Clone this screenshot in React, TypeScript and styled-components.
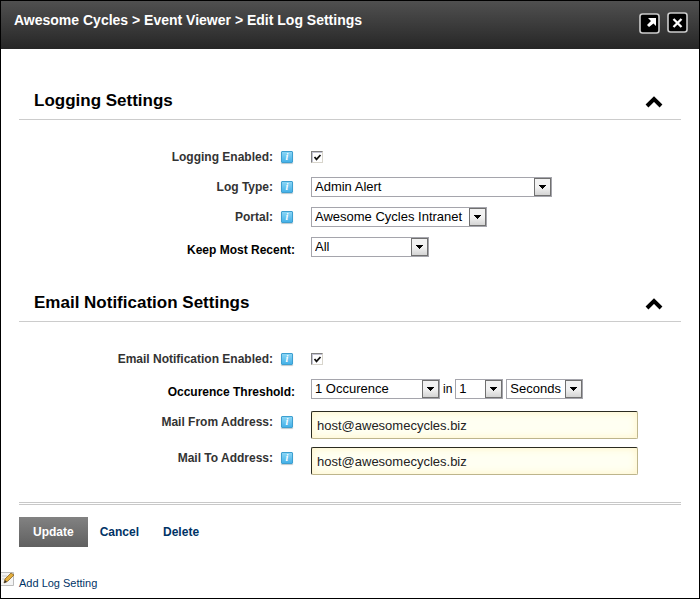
import React, { useState } from "react";
import styled, { createGlobalStyle } from "styled-components";

const GlobalStyle = createGlobalStyle`
  * { box-sizing: border-box; }
  body {
    margin: 0;
    background: #fff;
    color: #000;
    font-family: "Liberation Sans", Arial, sans-serif;
    font-size: 12px;
  }
`;

const Dialog = styled.div`
  min-height: 100vh;
  border: 1px solid #000;
  background: #fff;
`;

const TitleBar = styled.header`
  display: flex;
  justify-content: space-between;
  align-items: flex-start;
  height: 48px;
  padding: 11px 10px 0 13px;
  background: linear-gradient(#505050, #262626);
`;

const Title = styled.h1`
  margin: 0;
  color: #fff;
  font-size: 14px;
  line-height: 16px;
`;

const WindowButtons = styled.div`
  display: flex;
  gap: 6px;
`;

const WindowButton = styled.button`
  display: flex;
  width: 22px;
  height: 22px;
  padding: 0;
  border: 0;
  background: none;
`;

const Content = styled.main`
  padding: 36px 18px 0;
`;

const SectionHead = styled.div`
  display: flex;
  justify-content: space-between;
  align-items: center;
  height: 35px;
  padding: 0 18px 2px 15px;
  border-bottom: 1px solid #ccc;
`;

const SectionTitle = styled.h2`
  margin: 0;
  font-size: 17px;
  line-height: 20px;
`;

const CollapseButton = styled.button`
  display: flex;
  padding: 0;
  border: 0;
  background: none;
`;

const Rows = styled.div`
  padding: 22px 0 25px;
`;

const Row = styled.div<{ $tall?: boolean }>`
  display: grid;
  grid-template-columns: 276px minmax(0, 1fr);
  column-gap: 16px;
  height: ${(p) => (p.$tall ? 36 : 30)}px;
`;

const LabelCell = styled.div<{ $plain?: boolean; $tall?: boolean }>`
  display: flex;
  justify-content: flex-end;
  align-items: center;
  gap: 8px;
  height: ${(p) => (p.$tall ? 36 : 30)}px;
  padding: ${(p) => (p.$plain ? "6px 0 0" : "0 2px 0 0")};
`;

const Label = styled.label<{ $plain?: boolean }>`
  color: ${(p) => (p.$plain ? "#000" : "#333")};
  font-weight: bold;
  line-height: 16px;
`;

const HelpButton = styled.button`
  width: 12px;
  height: 12px;
  padding: 0;
  border: 1px solid #3d9fd0;
  border-radius: 1px;
  background: linear-gradient(#8ad5f5, #45b1e8);
  box-shadow: 0 1px 1px #bcc8ce;
  color: #fff;
  font: italic bold 10px/10px "Liberation Serif", serif;
`;

const Field = styled.div<{ $tall?: boolean }>`
  display: flex;
  align-items: flex-start;
  gap: 3px;
  padding-top: ${(p) => (p.$tall ? 7 : 5)}px;
  line-height: 20px;
`;

const CheckFrame = styled.span`
  display: grid;
  margin-top: 4px;
  width: 13px;
  height: 13px;

  > * { grid-area: 1 / 1; }
  > svg { pointer-events: none; }
  input:not(:checked) + svg { visibility: hidden; }
`;

const CheckInput = styled.input`
  appearance: none;
  width: 12px;
  height: 12px;
  margin: 0;
  border: 1px solid #d8d5cc;
  border-top-color: #808080;
  border-left-color: #808080;
  background: #fff;
  box-shadow: inset 1px 1px #c4c4d4;
`;

const SelectFrame = styled.span<{ $width: number }>`
  display: grid;
  grid-template-columns: minmax(0, 1fr) 18px;
  align-items: center;
  width: ${(p) => p.$width}px;
  height: 20px;
`;

const NativeSelect = styled.select`
  grid-area: 1 / 1 / 2 / 3;
  appearance: none;
  width: 100%;
  height: 20px;
  padding: 0 18px 0 3px;
  border: 1px solid #a5a5ac;
  border-radius: 0;
  background: #fff;
  color: #000;
  font: 13px/18px "Liberation Sans", Arial, sans-serif;
`;

const Arrow = styled.span`
  grid-area: 1 / 2;
  z-index: 1;
  display: flex;
  align-items: center;
  justify-content: center;
  width: 17px;
  height: 18px;
  border: 1px solid #707070;
  background: linear-gradient(#f2f2f2 50%, #d4d4d4);
  pointer-events: none;
`;

const MailInput = styled.input`
  width: 100%;
  max-width: 327px;
  height: 28px;
  padding: 0 5px;
  border: 1px solid #bdb58c;
  border-top-color: #2b2b20;
  border-left-color: #2b2b20;
  border-radius: 2px;
  background: #fffff2;
  box-shadow: inset 0 0 8px #fff3c4;
  color: #222;
  font: 13px "Liberation Sans", Arial, sans-serif;
`;

const Actions = styled.div`
  display: flex;
  align-items: center;
  margin-top: 1px;
  padding-top: 12px;
  border-top: 3px double #c8c8c8;
`;

const UpdateButton = styled.button`
  height: 30px;
  padding: 0 14px;
  border: 0;
  background: linear-gradient(#828282, #606060);
  color: #fff;
  font: bold 12px "Liberation Sans", Arial, sans-serif;
`;

const ActionLink = styled.a`
  padding: 0 12px;
  color: #036;
  font-weight: bold;
  text-decoration: none;
`;

const AddLink = styled.a`
  display: inline-flex;
  align-items: flex-start;
  gap: 4px;
  margin-top: 24px;
  color: #036;
  font-size: 11px;
  line-height: 24px;
  text-decoration: none;
`;

function Chevron() {
  return (
    <svg width="18" height="14" viewBox="0 0 18 14">
      <path d="M2 12 9 5 16 12" fill="none" stroke="#000" strokeWidth="4" />
    </svg>
  );
}

function Section({ title, children }: { title: string; children: React.ReactNode }) {
  const [open, setOpen] = useState(true);
  return (
    <section>
      <SectionHead>
        <SectionTitle>{title}</SectionTitle>
        <CollapseButton type="button" aria-label={title} aria-expanded={open} onClick={() => setOpen(!open)}>
          <Chevron />
        </CollapseButton>
      </SectionHead>
      {open && <Rows>{children}</Rows>}
    </section>
  );
}

type SettingProps = { id: string; label: string; plain?: boolean; tall?: boolean; children: React.ReactNode };

function Setting({ id, label, plain, tall, children }: SettingProps) {
  return (
    <Row $tall={tall}>
      <LabelCell $plain={plain} $tall={tall}>
        <Label htmlFor={id} $plain={plain}>{label}</Label>
        {!plain && <HelpButton type="button">i</HelpButton>}
      </LabelCell>
      <Field $tall={tall}>{children}</Field>
    </Row>
  );
}

function Checkbox({ id }: { id: string }) {
  return (
    <CheckFrame>
      <CheckInput id={id} type="checkbox" defaultChecked />
      <svg width="13" height="13" viewBox="0 0 13 13">
        <path d="m3.5 6 2 2.3 4-4.3" fill="none" stroke="#111" strokeWidth="1.8" />
      </svg>
    </CheckFrame>
  );
}

function Select({ id, label, value, width }: { id: string; label?: string; value: string; width: number }) {
  return (
    <SelectFrame $width={width}>
      <NativeSelect id={id} aria-label={label}>
        <option>{value}</option>
      </NativeSelect>
      <Arrow>
        <svg width="7" height="4" viewBox="0 0 7 4" shapeRendering="crispEdges">
          <path d="M0 0h7L3.5 4z" />
        </svg>
      </Arrow>
    </SelectFrame>
  );
}

export default function App() {
  return (
    <Dialog>
      <GlobalStyle />
      <TitleBar>
        <Title>Awesome Cycles &gt; Event Viewer &gt; Edit Log Settings</Title>
        <WindowButtons>
          <WindowButton type="button" aria-label="Maximize">
            <svg width="22" height="22" viewBox="0 0 22 22">
              <rect x="1" y="2" width="19" height="19" rx="2.5" fill="#000" stroke="#ccc" strokeWidth="1.6" />
              <path d="M9 6h8v8l-2.5-2.5-4.5 3.5-2-2 4-4z" fill="#fff" />
            </svg>
          </WindowButton>
          <WindowButton type="button" aria-label="Close">
            <svg width="22" height="22" viewBox="0 0 22 22">
              <rect x="1" y="1" width="19" height="19" rx="2.5" fill="#000" stroke="#ccc" strokeWidth="1.6" />
              <path d="m6.5 7 8 8M14.5 7l-8 8" stroke="#fff" strokeWidth="2.3" />
            </svg>
          </WindowButton>
        </WindowButtons>
      </TitleBar>
      <Content>
        <Section title="Logging Settings">
          <Setting id="logging" label="Logging Enabled:">
            <Checkbox id="logging" />
          </Setting>
          <Setting id="log-type" label="Log Type:">
            <Select id="log-type" value="Admin Alert" width={241} />
          </Setting>
          <Setting id="portal" label="Portal:">
            <Select id="portal" value="Awesome Cycles Intranet" width={176} />
          </Setting>
          <Setting id="keep" label="Keep Most Recent:" plain>
            <Select id="keep" value="All" width={118} />
          </Setting>
        </Section>
        <Section title="Email Notification Settings">
          <Setting id="email" label="Email Notification Enabled:">
            <Checkbox id="email" />
          </Setting>
          <Setting id="threshold" label="Occurence Threshold:" plain>
            <Select id="threshold" value="1 Occurence" width={129} />
            in
            <Select id="period" label="Period" value="1" width={48} />
            <Select id="unit" label="Unit" value="Seconds" width={77} />
          </Setting>
          <Setting id="mail-from" label="Mail From Address:" tall>
            <MailInput id="mail-from" defaultValue="host@awesomecycles.biz" />
          </Setting>
          <Setting id="mail-to" label="Mail To Address:" tall>
            <MailInput id="mail-to" defaultValue="host@awesomecycles.biz" />
          </Setting>
        </Section>
        <Actions>
          <UpdateButton type="button">Update</UpdateButton>
          <ActionLink href="#cancel">Cancel</ActionLink>
          <ActionLink href="#delete">Delete</ActionLink>
        </Actions>
      </Content>
      <AddLink href="#add">
        <svg width="14" height="16" viewBox="0 0 14 16">
          <path d="M0 1.5h12.5v13H0" fill="#f4f4f4" stroke="#bbb" />
          <path d="M1 5h5M1 8h3" stroke="#c8c8c8" />
          <path d="m3 12 1-4 6-6 3 2-6 6z" fill="#e2ae3c" stroke="#8c6425" strokeWidth=".8" />
          <path d="m3 12 1-3 2 2z" fill="#333" />
        </svg>
        Add Log Setting
      </AddLink>
    </Dialog>
  );
}
